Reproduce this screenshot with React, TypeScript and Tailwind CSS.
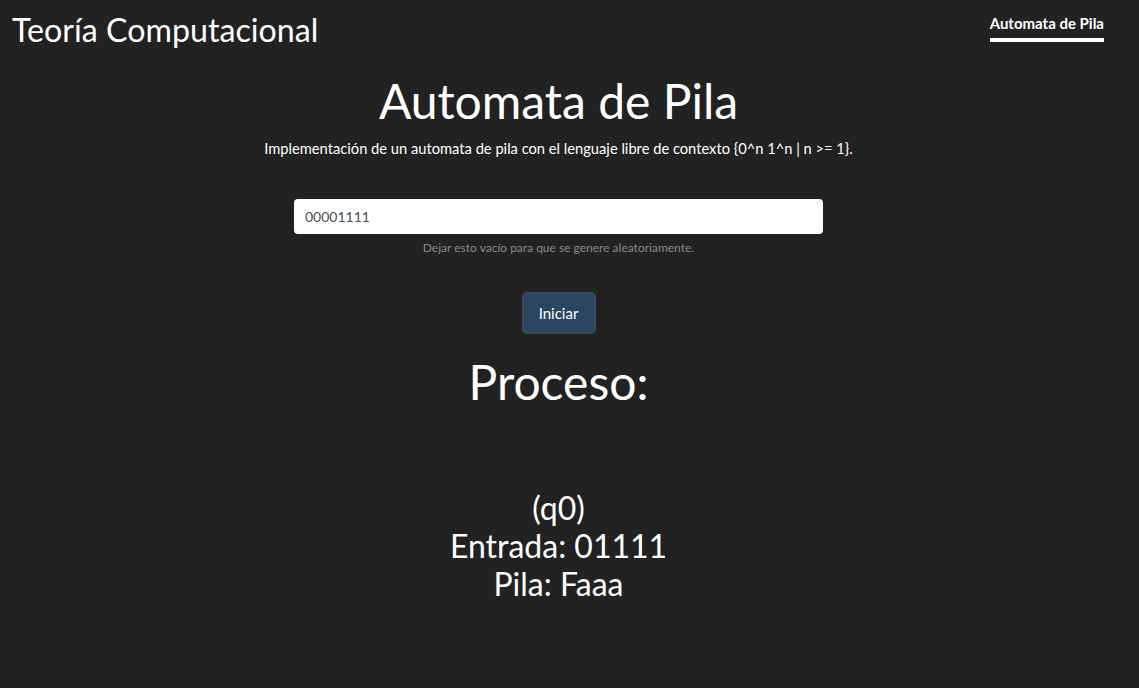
import { useState } from 'react';

export default function App() {
  const [input, setInput] = useState('00001111');

  return (
    <div className="min-h-screen w-full bg-[#222222] text-white" style={{ fontFamily: 'Lato, "Open Sans", sans-serif' }}>
      <div className="w-[1117px]">
        <header className="flex items-start justify-between pl-3 pr-[13px] pt-[10px]">
          <h1 className="text-[32.2px] leading-[40px]">Teoría Computacional</h1>
          <nav className="pt-[5px]">
            <a className="block border-b-4 border-white pb-[7px] text-[15px] font-bold leading-[16px]">Automata de Pila</a>
          </nav>
        </header>

        <main className="flex flex-col items-center">
          <h2 className="mt-[23px] text-[48px] leading-[56px]">Automata de Pila</h2>
          <p className="mt-[9px] text-[14.7px] leading-[20px]">
            Implementación de un automata de pila con el lenguaje libre de contexto {'{0^n 1^n | n >= 1}'}.
          </p>

          <div className="mt-[41px] flex w-[529px] flex-col items-center">
            <input
              value={input}
              onChange={e => setInput(e.target.value)}
              className="h-[35px] w-full rounded bg-white px-[11px] text-[14px] text-[#495057] outline-none"
            />
            <small className="mt-[6px] text-[12px] leading-[16px] text-[#8a8a8a]">Dejar esto vacío para que se genere aleatoriamente.</small>
          </div>

          <button className="mt-[36px] h-[42px] w-[74px] rounded-[5px] border-2 border-[#3b4b5c] bg-[#2b4663] text-[15px] text-white">
            Iniciar
          </button>

          <h2 className="mt-[19px] text-[48px] leading-[58px]">Proceso:</h2>

          <div className="mt-[78px] flex flex-col items-center text-[32px] leading-[38px]">
            <span>(q0)</span>
            <span>Entrada: 01111</span>
            <span>Pila: Faaa</span>
          </div>
        </main>
      </div>
    </div>
  );
}
